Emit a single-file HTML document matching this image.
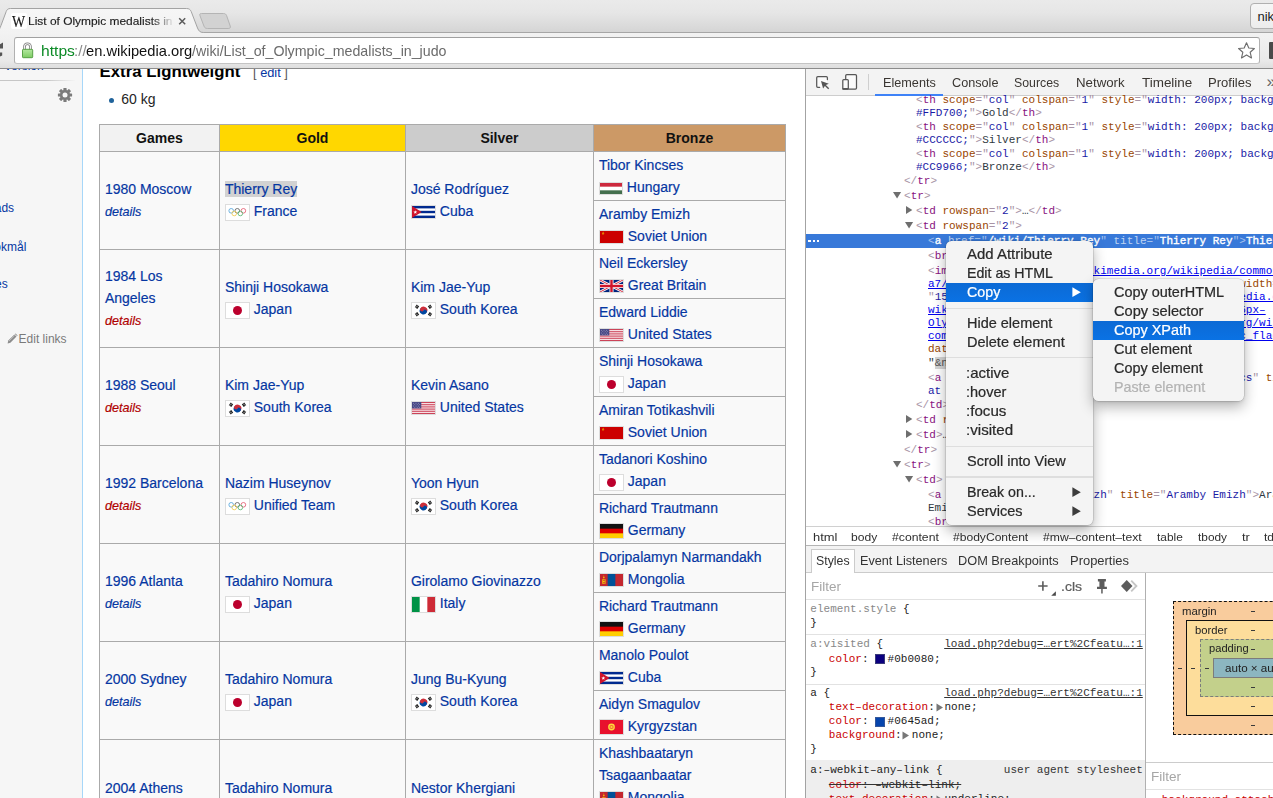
<!DOCTYPE html><html><head><meta charset="utf-8"><title>List of Olympic medalists in judo</title><style>

*{box-sizing:border-box;margin:0;padding:0}
html,body{width:1273px;height:798px;overflow:hidden;background:#fff}
body{position:relative;font-family:"Liberation Sans",sans-serif;color:#222}
.t{position:absolute;white-space:pre;font-family:"Liberation Sans",sans-serif}
.m{font-family:"Liberation Mono",monospace;letter-spacing:0.02px}
.abs{position:absolute}


#page{position:absolute;left:0;top:69px;width:805px;height:729px;overflow:hidden;background:#fff}
#side{position:absolute;left:0;top:0;width:82px;height:729px;background:#f6f6f6}
#sideb{position:absolute;left:82px;top:0;width:1px;height:729px;background:#a7d7f9}
table.wt{position:absolute;left:99px;top:55px;border-collapse:collapse;table-layout:fixed;width:686px;font:14px/22px "Liberation Sans",sans-serif;color:#252525;background:#f9f9f9}
table.wt td,table.wt th{border:1px solid #aaa;padding:0 5px 0 4.9px;vertical-align:middle;text-align:left;overflow:hidden;white-space:nowrap}
table.wt th{background:#f2f2f2;text-align:center;font-weight:bold;height:27px;color:#111}
table.wt td.b{height:49px}
table.wt td.g{padding-bottom:1px}
table.wt a{color:#0536a2;text-decoration:none;-webkit-text-stroke:0.18px currentColor}
table.wt a.v{color:#0b0080}
table.wt a.n{color:#b00000}
table.wt i{font-style:italic;font-size:12.6px}
.fl{display:inline-block;vertical-align:middle;border:1px solid #ddd;line-height:0;box-sizing:content-box}
.fl svg{display:block}
.sel{background:#d2d2d2}

#dt{position:absolute;left:805px;top:69px;width:468px;height:729px;overflow:hidden;background:#fff;border-left:1px solid #a3a3a3}
#dt .t{color:#303942}
.tg{color:#881280}.br{color:#a894a6}.an{color:#994500}.av{color:#1a1aa6}.lk{color:#00e;text-decoration:underline}.tx{color:#303942}
.selrow .tg,.selrow .av,.selrow .tx{color:#fff;-webkit-text-stroke:0.35px #fff}
.selrow .an{color:rgba(255,255,255,.68)}.selrow .br{color:rgba(255,255,255,.55)}
.pn{color:#c80000}.pv{color:#222}.gr{color:#888}
.tri{position:absolute;width:0;height:0}

.menu{position:absolute;background:#f4f4f4;border-radius:5.5px;box-shadow:0 0 0 0.5px rgba(0,0,0,.16),0 6px 14px rgba(0,0,0,.30),0 1px 3px rgba(0,0,0,.10)}
.menu .hl{position:absolute;left:0;right:0;height:19px;background:linear-gradient(#0c6ad5,#0a72e4)}
.menu .sep{position:absolute;left:0;right:0;height:1.5px;background:#dedede}

</style></head><body>
<div id="chrome"><div class="abs" style="left:0;top:0;width:1273px;height:32px;background:linear-gradient(#eaeaea,#e6e6e6 40%,#d5d5d5)"></div>
<div class="abs" style="left:0;top:32px;width:1273px;height:1px;background:#a6a6a6"></div>
<div class="abs" style="left:0;top:33px;width:1273px;height:35px;background:linear-gradient(#f2f2f2,#e9e9e9 80%,#dedede)"></div>
<div class="abs" style="left:0;top:68px;width:1273px;height:1px;background:#8c8c8c"></div>
<svg class="abs" style="left:0;top:0" width="260" height="34" viewBox="0 0 260 34">
<defs><linearGradient id="tg" x1="0" y1="0" x2="0" y2="1"><stop offset="0" stop-color="#f6f6f6"/><stop offset="1" stop-color="#f2f2f2"/></linearGradient></defs>
<path d="M-6 33.2 L-3.5 32.5 C-1 31 0 28 1 25.5 L6.2 11.5 C7 9.5 8 8.5 10.5 8.5 L186.5 8.5 C189 8.5 190.3 9.5 191.2 11.5 L197.5 28 C198.8 31 200 32.5 203.5 32.5 L203.5 33.2 Z" fill="url(#tg)"/>
<path d="M-6 32.5 L-3.5 32.5 C-1 31 0 28 1 25.5 L6.2 11.5 C7 9.5 8 8.5 10.5 8.5 L186.5 8.5 C189 8.5 190.3 9.5 191.2 11.5 L197.5 28 C198.8 31 200 32.5 203.5 32.5" fill="none" stroke="#a3a3a3" stroke-width="1"/>
<path d="M201.5 13.5 L223.5 13.5 C225.2 13.5 226 14.2 226.6 15.6 L230.2 26 C230.8 27.8 230 28.5 228.2 28.5 L207.5 28.5 C205.6 28.5 204.6 27.8 204 26.2 L200 15.8 C199.4 14.2 199.8 13.5 201.5 13.5 Z" fill="#d2d2d2" stroke="#b4b4b4" stroke-width="1"/>
</svg>
<div class="abs" style="left:11px;top:13px;width:16px;height:16px;background:#fff;border-radius:2px"></div>
<div class="t" style="top:10.50px;font-size:16.5px;line-height:21px;left:11.9px;color:#1a1a1a;font-family:'Liberation Serif',serif;transform:scaleX(0.84);transform-origin:0 0;-webkit-text-stroke:0.2px #1a1a1a">W</div>
<div class="abs" style="left:29px;top:11px;width:147px;height:20px;overflow:hidden;-webkit-mask-image:linear-gradient(90deg,#000 122px,transparent 146px);mask-image:linear-gradient(90deg,#000 122px,transparent 146px)"><div class="t" style="top:3.00px;font-size:11.1px;line-height:14px;left:-0.6799999999999997px;color:#1d1d1d;transform-origin:0 0;transform:scaleX(1.0752);-webkit-text-stroke:0.15px #1d1d1d">List of Olympic medalists in judo</div></div>
<svg class="abs" style="left:178px;top:17px" width="9" height="9" viewBox="0 0 9 9"><path d="M1.2 1.2 L7.2 7.2 M7.2 1.2 L1.2 7.2" stroke="#5a5a5a" stroke-width="1.5" fill="none"/></svg>
<div class="abs" style="left:1250px;top:3px;width:40px;height:26px;border:1px solid #b0b0b0;border-radius:4px;background:linear-gradient(#f6f6f6,#ececec)"></div>
<div class="t" style="top:8.40px;font-size:13px;line-height:17px;left:1257.5px;color:#222;">nik</div>
<svg class="abs" style="left:0;top:42px" width="5" height="16" viewBox="0 0 5 16"><path d="M0 2.2 L3 0.5 L3 6.5 L0 6.5 Z" fill="#555"/><path d="M0 10.5 L2.2 10.5 L2.2 13.5 L0 14.5 Z" fill="#555"/></svg>
<div class="abs" style="left:14px;top:37px;width:1246px;height:27px;background:#fff;border:1px solid #b1b1b1;border-top-color:#a0a0a0;border-bottom-color:#c4c4c4;border-radius:3px"></div>
<svg class="abs" style="left:21px;top:42px" width="14" height="17" viewBox="0 0 14 17">
<defs><linearGradient id="lg" x1="0" y1="0" x2="0" y2="1"><stop offset="0" stop-color="#b4e7a0"/><stop offset="0.45" stop-color="#9bdc84"/><stop offset="1" stop-color="#7ccb63"/></linearGradient></defs>
<path d="M3.5 8 L3.5 5 C3.5 2.7 4.9 1.8 6.5 1.8 C8.1 1.8 9.5 2.7 9.5 5 L9.5 8" fill="none" stroke="#7b7b7b" stroke-width="2.6"/>
<path d="M3.5 8 L3.5 5 C3.5 2.7 4.9 1.8 6.5 1.8 C8.1 1.8 9.5 2.7 9.5 5 L9.5 8" fill="none" stroke="#f4f4f4" stroke-width="1.1"/>
<rect x="1.5" y="7.3" width="10.2" height="8.4" rx="0.8" fill="url(#lg)" stroke="#4c9a3a" stroke-width="0.9"/>
</svg>
<div class="t" style="top:41.50px;font-size:14.4px;line-height:19px;left:40.64px;color:#0c8a26;transform-origin:0 0;transform:scaleX(1.0862)">https</div>
<div class="t" style="top:41.50px;font-size:14.4px;line-height:19px;left:74.14px;color:#8a8a8a;transform-origin:0 0;transform:scaleX(1.0475)">://</div>
<div class="t" style="top:41.50px;font-size:14.4px;line-height:19px;left:86.28px;color:#111;transform-origin:0 0;transform:scaleX(1.0212)">en.wikipedia.org</div>
<div class="t" style="top:41.50px;font-size:14.4px;line-height:19px;left:192.3px;color:#6b6b6b;transform-origin:0 0;transform:scaleX(0.9881)">/wiki/List_of_Olympic_medalists_in_judo</div>
<svg class="abs" style="left:1237px;top:41px" width="19" height="19" viewBox="0 0 19 19">
<path d="M9.5 1.8 L11.8 7 L17.4 7.5 L13.2 11.3 L14.5 16.9 L9.5 13.9 L4.5 16.9 L5.8 11.3 L1.6 7.5 L7.2 7 Z" fill="#fff" stroke="#6e6e6e" stroke-width="1.15" stroke-linejoin="round"/></svg>
<div class="abs" style="left:1269px;top:42px;width:6px;height:17px;background:#4a4a4a;border-radius:1px"></div></div>
<div id="page"><div id="side"></div><div id="sideb"></div>
<div class="t" style="top:-11.00px;font-size:12px;line-height:16px;left:5px;color:#0536a2;">version</div>
<div class="abs" style="left:0;top:11px;width:76px;height:1px;background:linear-gradient(90deg,#c6c6c6 60%,rgba(198,198,198,0))"></div>
<svg class="abs" style="left:57px;top:18px" width="16" height="16" viewBox="0 0 16 16">
<g fill="#7b7b7b"><circle cx="8" cy="8" r="5.1"/>
<rect x="6.4" y="0.9" width="3.2" height="14.2" rx="0.6"/>
<rect x="6.4" y="0.9" width="3.2" height="14.2" rx="0.6" transform="rotate(45 8 8)"/>
<rect x="6.4" y="0.9" width="3.2" height="14.2" rx="0.6" transform="rotate(90 8 8)"/>
<rect x="6.4" y="0.9" width="3.2" height="14.2" rx="0.6" transform="rotate(135 8 8)"/></g>
<circle cx="8" cy="8" r="2.5" fill="#f6f6f6"/></svg>
<div class="t" style="top:131.00px;font-size:12px;line-height:16px;left:-14.6px;color:#0536a2;">loads</div>
<div class="t" style="top:170.00px;font-size:12px;line-height:16px;left:-12.4px;color:#0536a2;">bokmål</div>
<div class="t" style="top:207.00px;font-size:12px;line-height:16px;left:-11.6px;color:#0536a2;">ges</div>
<svg class="abs" style="left:7px;top:264px" width="11" height="11" viewBox="0 0 11 11"><path d="M0.6 10.4 L1.3 7.6 L7.4 1.5 L9.5 3.6 L3.4 9.7 Z" fill="#8c8c8c"/><path d="M7.9 1 L8.6 0.4 L10.6 2.4 L10 3.1 Z" fill="#8c8c8c"/><path d="M2 8 L7.6 2.6" stroke="#d0d0d0" stroke-width="0.7"/></svg>
<div class="t" style="top:262.00px;font-size:12px;line-height:16px;left:18.6px;color:#7a7a7a;">Edit links</div><div class="t" style="top:-8.50px;font-size:16.8px;line-height:22px;left:99.6px;color:#000;font-weight:bold">Extra Lightweight</div>
<div class="t" style="top:-5.00px;font-size:12.8px;line-height:17px;left:253px;"><span style="color:#555">[ </span><span style="color:#0536a2">edit</span><span style="color:#555"> ]</span></div>
<div class="abs" style="left:109px;top:28.5px;width:5px;height:5px;border-radius:50%;background:#20639b"></div>
<div class="t" style="top:21.30px;font-size:14px;line-height:18px;left:121.3px;color:#252525;">60 kg</div><table class="wt"><colgroup><col style="width:120px"><col style="width:186px"><col style="width:188px"><col style="width:192px"></colgroup>
<tr><th>Games</th><th style="background:#ffd700">Gold</th><th style="background:#ccc">Silver</th><th style="background:#c96">Bronze</th></tr>
<tr><td rowspan="2"><a>1980 Moscow</a><br><i><a>details</a></i></td><td rowspan="2" class="g"><a><span class="sel">Thierry Rey</span></a><br><span class="fl"><svg width="23" height="15" viewBox="0 0 23 15"><rect width="23" height="15" fill="#fff"/>
<g fill="none" stroke-width="0.8"><circle cx="5.2" cy="5.8" r="2.3" stroke="#4a9fd8"/><circle cx="11.3" cy="5.8" r="2.3" stroke="#555"/><circle cx="17.4" cy="5.8" r="2.3" stroke="#e3536a"/><circle cx="8.25" cy="8.5" r="2.3" stroke="#f0c645"/><circle cx="14.35" cy="8.5" r="2.3" stroke="#4fb56c"/></g></svg></span>&nbsp;<a>France</a></td><td rowspan="2" class="g"><a>José Rodríguez</a><br><span class="fl"><svg width="23" height="12" viewBox="0 0 23 12"><rect width="23" height="12" fill="#002a8f"/><rect y="2.4" width="23" height="2.4" fill="#fff"/><rect y="7.2" width="23" height="2.4" fill="#fff"/>
<path d="M0 0 L9.6 6 L0 12 Z" fill="#cf142b"/><path d="M3.3 4.2 L3.8 5.5 L5.2 5.5 L4.1 6.4 L4.5 7.7 L3.3 6.9 L2.1 7.7 L2.5 6.4 L1.4 5.5 L2.8 5.5 Z" fill="#fff"/></svg></span>&nbsp;<a>Cuba</a></td><td class="b"><a>Tibor Kincses</a><br><span class="fl"><svg width="22" height="11" viewBox="0 0 22 11"><rect width="22" height="11" fill="#fff"/><rect width="22" height="3.67" fill="#cd2a3e"/><rect y="7.33" width="22" height="3.67" fill="#436f4d"/></svg></span>&nbsp;<a>Hungary</a></td></tr>
<tr><td class="b"><a>Aramby Emizh</a><br><span class="fl"><svg width="23" height="12" viewBox="0 0 23 12"><rect width="23" height="12" fill="#cc0000"/><path d="M2.6 1.6 L3.4 1.6 L3.4 3.9 L2.6 3.9 Z M2 2.2 L4.2 2.2 L4.2 2.9 L2 2.9Z" fill="#e8a200" opacity="0.9"/><circle cx="3.2" cy="1.3" r="0.5" fill="#e8a200"/></svg></span>&nbsp;<a>Soviet Union</a></td></tr>
<tr><td rowspan="2"><a>1984 Los<br>Angeles</a><br><i><a class="n">details</a></i></td><td rowspan="2" class="g"><a>Shinji Hosokawa</a><br><span class="fl"><svg width="23" height="15" viewBox="0 0 23 15"><rect width="23" height="15" fill="#fff"/><circle cx="11.5" cy="7.5" r="4.5" fill="#bc002d"/></svg></span>&nbsp;<a>Japan</a></td><td rowspan="2" class="g"><a>Kim Jae-Yup</a><br><span class="fl"><svg width="23" height="15" viewBox="0 0 23 15"><rect width="23" height="15" fill="#fff"/>
<g transform="rotate(33.7 11.5 7.5)"><path d="M7.7 7.5 A3.8 3.8 0 0 1 15.3 7.5 Z" fill="#cd2e3a"/><path d="M7.7 7.5 A3.8 3.8 0 0 0 15.3 7.5 Z" fill="#0047a0"/><circle cx="9.6" cy="7.5" r="1.9" fill="#cd2e3a"/><circle cx="13.4" cy="7.5" r="1.9" fill="#0047a0"/></g>
<g fill="#222"><rect x="3.3" y="2.2" width="3.4" height="3" transform="rotate(-56 5 3.7)"/><rect x="16.3" y="2.2" width="3.4" height="3" transform="rotate(56 18 3.7)"/><rect x="3.3" y="9.8" width="3.4" height="3" transform="rotate(56 5 11.3)"/><rect x="16.3" y="9.8" width="3.4" height="3" transform="rotate(-56 18 11.3)"/></g>
<g stroke="#fff" stroke-width="0.45"><path d="M3.2 4.6 L6.6 2.4 M16.4 2.4 L19.8 4.6 M3.2 10.4 L6.6 12.6 M16.4 12.6 L19.8 10.4"/></g></svg></span>&nbsp;<a>South Korea</a></td><td class="b"><a>Neil Eckersley</a><br><span class="fl"><svg width="23" height="12" viewBox="0 0 23 12"><rect width="23" height="12" fill="#00247d"/>
<path d="M0 0 L23 12 M23 0 L0 12" stroke="#fff" stroke-width="2.6"/>
<path d="M0 0 L23 12 M23 0 L0 12" stroke="#cf142b" stroke-width="0.9"/>
<path d="M11.5 0 V12 M0 6 H23" stroke="#fff" stroke-width="4"/>
<path d="M11.5 0 V12 M0 6 H23" stroke="#cf142b" stroke-width="2.4"/></svg></span>&nbsp;<a>Great Britain</a></td></tr>
<tr><td class="b"><a>Edward Liddie</a><br><span class="fl"><svg width="23" height="12" viewBox="0 0 23 12"><rect width="23" height="12" fill="#fff"/><rect y="0.000" width="23" height="0.923" fill="#c8334a"/><rect y="1.846" width="23" height="0.923" fill="#c8334a"/><rect y="3.692" width="23" height="0.923" fill="#c8334a"/><rect y="5.538" width="23" height="0.923" fill="#c8334a"/><rect y="7.385" width="23" height="0.923" fill="#c8334a"/><rect y="9.231" width="23" height="0.923" fill="#c8334a"/><rect y="11.077" width="23" height="0.923" fill="#c8334a"/><rect width="9.3" height="6.46" fill="#4a4a86"/><g fill="#b8b8d8"><circle cx="1.6" cy="1.2" r=".45"/><circle cx="4" cy="1.2" r=".45"/><circle cx="6.4" cy="1.2" r=".45"/><circle cx="2.8" cy="2.6" r=".45"/><circle cx="5.2" cy="2.6" r=".45"/><circle cx="7.6" cy="2.6" r=".45"/><circle cx="1.6" cy="4" r=".45"/><circle cx="4" cy="4" r=".45"/><circle cx="6.4" cy="4" r=".45"/><circle cx="2.8" cy="5.3" r=".45"/><circle cx="5.2" cy="5.3" r=".45"/><circle cx="7.6" cy="5.3" r=".45"/></g></svg></span>&nbsp;<a>United States</a></td></tr>
<tr><td rowspan="2"><a>1988 Seoul</a><br><i><a class="n">details</a></i></td><td rowspan="2" class="g"><a>Kim Jae-Yup</a><br><span class="fl"><svg width="23" height="15" viewBox="0 0 23 15"><rect width="23" height="15" fill="#fff"/>
<g transform="rotate(33.7 11.5 7.5)"><path d="M7.7 7.5 A3.8 3.8 0 0 1 15.3 7.5 Z" fill="#cd2e3a"/><path d="M7.7 7.5 A3.8 3.8 0 0 0 15.3 7.5 Z" fill="#0047a0"/><circle cx="9.6" cy="7.5" r="1.9" fill="#cd2e3a"/><circle cx="13.4" cy="7.5" r="1.9" fill="#0047a0"/></g>
<g fill="#222"><rect x="3.3" y="2.2" width="3.4" height="3" transform="rotate(-56 5 3.7)"/><rect x="16.3" y="2.2" width="3.4" height="3" transform="rotate(56 18 3.7)"/><rect x="3.3" y="9.8" width="3.4" height="3" transform="rotate(56 5 11.3)"/><rect x="16.3" y="9.8" width="3.4" height="3" transform="rotate(-56 18 11.3)"/></g>
<g stroke="#fff" stroke-width="0.45"><path d="M3.2 4.6 L6.6 2.4 M16.4 2.4 L19.8 4.6 M3.2 10.4 L6.6 12.6 M16.4 12.6 L19.8 10.4"/></g></svg></span>&nbsp;<a>South Korea</a></td><td rowspan="2" class="g"><a>Kevin Asano</a><br><span class="fl"><svg width="23" height="12" viewBox="0 0 23 12"><rect width="23" height="12" fill="#fff"/><rect y="0.000" width="23" height="0.923" fill="#c8334a"/><rect y="1.846" width="23" height="0.923" fill="#c8334a"/><rect y="3.692" width="23" height="0.923" fill="#c8334a"/><rect y="5.538" width="23" height="0.923" fill="#c8334a"/><rect y="7.385" width="23" height="0.923" fill="#c8334a"/><rect y="9.231" width="23" height="0.923" fill="#c8334a"/><rect y="11.077" width="23" height="0.923" fill="#c8334a"/><rect width="9.3" height="6.46" fill="#4a4a86"/><g fill="#b8b8d8"><circle cx="1.6" cy="1.2" r=".45"/><circle cx="4" cy="1.2" r=".45"/><circle cx="6.4" cy="1.2" r=".45"/><circle cx="2.8" cy="2.6" r=".45"/><circle cx="5.2" cy="2.6" r=".45"/><circle cx="7.6" cy="2.6" r=".45"/><circle cx="1.6" cy="4" r=".45"/><circle cx="4" cy="4" r=".45"/><circle cx="6.4" cy="4" r=".45"/><circle cx="2.8" cy="5.3" r=".45"/><circle cx="5.2" cy="5.3" r=".45"/><circle cx="7.6" cy="5.3" r=".45"/></g></svg></span>&nbsp;<a>United States</a></td><td class="b"><a>Shinji Hosokawa</a><br><span class="fl"><svg width="23" height="15" viewBox="0 0 23 15"><rect width="23" height="15" fill="#fff"/><circle cx="11.5" cy="7.5" r="4.5" fill="#bc002d"/></svg></span>&nbsp;<a>Japan</a></td></tr>
<tr><td class="b"><a>Amiran Totikashvili</a><br><span class="fl"><svg width="23" height="12" viewBox="0 0 23 12"><rect width="23" height="12" fill="#cc0000"/><path d="M2.6 1.6 L3.4 1.6 L3.4 3.9 L2.6 3.9 Z M2 2.2 L4.2 2.2 L4.2 2.9 L2 2.9Z" fill="#e8a200" opacity="0.9"/><circle cx="3.2" cy="1.3" r="0.5" fill="#e8a200"/></svg></span>&nbsp;<a>Soviet Union</a></td></tr>
<tr><td rowspan="2"><a>1992 Barcelona</a><br><i><a class="n">details</a></i></td><td rowspan="2" class="g"><a>Nazim Huseynov</a><br><span class="fl"><svg width="23" height="15" viewBox="0 0 23 15"><rect width="23" height="15" fill="#fff"/>
<g fill="none" stroke-width="0.8"><circle cx="5.2" cy="5.8" r="2.3" stroke="#4a9fd8"/><circle cx="11.3" cy="5.8" r="2.3" stroke="#555"/><circle cx="17.4" cy="5.8" r="2.3" stroke="#e3536a"/><circle cx="8.25" cy="8.5" r="2.3" stroke="#f0c645"/><circle cx="14.35" cy="8.5" r="2.3" stroke="#4fb56c"/></g></svg></span>&nbsp;<a>Unified Team</a></td><td rowspan="2" class="g"><a>Yoon Hyun</a><br><span class="fl"><svg width="23" height="15" viewBox="0 0 23 15"><rect width="23" height="15" fill="#fff"/>
<g transform="rotate(33.7 11.5 7.5)"><path d="M7.7 7.5 A3.8 3.8 0 0 1 15.3 7.5 Z" fill="#cd2e3a"/><path d="M7.7 7.5 A3.8 3.8 0 0 0 15.3 7.5 Z" fill="#0047a0"/><circle cx="9.6" cy="7.5" r="1.9" fill="#cd2e3a"/><circle cx="13.4" cy="7.5" r="1.9" fill="#0047a0"/></g>
<g fill="#222"><rect x="3.3" y="2.2" width="3.4" height="3" transform="rotate(-56 5 3.7)"/><rect x="16.3" y="2.2" width="3.4" height="3" transform="rotate(56 18 3.7)"/><rect x="3.3" y="9.8" width="3.4" height="3" transform="rotate(56 5 11.3)"/><rect x="16.3" y="9.8" width="3.4" height="3" transform="rotate(-56 18 11.3)"/></g>
<g stroke="#fff" stroke-width="0.45"><path d="M3.2 4.6 L6.6 2.4 M16.4 2.4 L19.8 4.6 M3.2 10.4 L6.6 12.6 M16.4 12.6 L19.8 10.4"/></g></svg></span>&nbsp;<a>South Korea</a></td><td class="b"><a>Tadanori Koshino</a><br><span class="fl"><svg width="23" height="15" viewBox="0 0 23 15"><rect width="23" height="15" fill="#fff"/><circle cx="11.5" cy="7.5" r="4.5" fill="#bc002d"/></svg></span>&nbsp;<a>Japan</a></td></tr>
<tr><td class="b"><a>Richard Trautmann</a><br><span class="fl"><svg width="23" height="14" viewBox="0 0 23 14"><rect width="23" height="14" fill="#dd0000"/><rect width="23" height="4.67" fill="#111"/><rect y="9.33" width="23" height="4.67" fill="#ffce00"/></svg></span>&nbsp;<a>Germany</a></td></tr>
<tr><td rowspan="2"><a>1996 Atlanta</a><br><i><a>details</a></i></td><td rowspan="2" class="g"><a>Tadahiro Nomura</a><br><span class="fl"><svg width="23" height="15" viewBox="0 0 23 15"><rect width="23" height="15" fill="#fff"/><circle cx="11.5" cy="7.5" r="4.5" fill="#bc002d"/></svg></span>&nbsp;<a>Japan</a></td><td rowspan="2" class="g"><a>Girolamo Giovinazzo</a><br><span class="fl"><svg width="23" height="15" viewBox="0 0 23 15"><rect width="23" height="15" fill="#fff"/><rect width="7.67" height="15" fill="#009246"/><rect x="15.33" width="7.67" height="15" fill="#ce2b37"/></svg></span>&nbsp;<a>Italy</a></td><td class="b"><a>Dorjpalamyn Narmandakh</a><br><span class="fl"><svg width="23" height="12" viewBox="0 0 23 12"><rect width="23" height="12" fill="#c4272f"/><rect x="7.67" width="7.67" height="12" fill="#015197"/><g fill="#f9cf02"><rect x="2.2" y="5.2" width=".7" height="4.6"/><rect x="4.8" y="5.2" width=".7" height="4.6"/><rect x="3" y="5.2" width="1.7" height=".7"/><rect x="3" y="9.1" width="1.7" height=".7"/><circle cx="3.85" cy="7.5" r=".95"/><circle cx="3.85" cy="3.6" r=".8"/><path d="M3.85 1.2 L4.4 2.5 L3.3 2.5Z"/></g></svg></span>&nbsp;<a>Mongolia</a></td></tr>
<tr><td class="b"><a>Richard Trautmann</a><br><span class="fl"><svg width="23" height="14" viewBox="0 0 23 14"><rect width="23" height="14" fill="#dd0000"/><rect width="23" height="4.67" fill="#111"/><rect y="9.33" width="23" height="4.67" fill="#ffce00"/></svg></span>&nbsp;<a>Germany</a></td></tr>
<tr><td rowspan="2"><a>2000 Sydney</a><br><i><a>details</a></i></td><td rowspan="2" class="g"><a>Tadahiro Nomura</a><br><span class="fl"><svg width="23" height="15" viewBox="0 0 23 15"><rect width="23" height="15" fill="#fff"/><circle cx="11.5" cy="7.5" r="4.5" fill="#bc002d"/></svg></span>&nbsp;<a>Japan</a></td><td rowspan="2" class="g"><a>Jung Bu-Kyung</a><br><span class="fl"><svg width="23" height="15" viewBox="0 0 23 15"><rect width="23" height="15" fill="#fff"/>
<g transform="rotate(33.7 11.5 7.5)"><path d="M7.7 7.5 A3.8 3.8 0 0 1 15.3 7.5 Z" fill="#cd2e3a"/><path d="M7.7 7.5 A3.8 3.8 0 0 0 15.3 7.5 Z" fill="#0047a0"/><circle cx="9.6" cy="7.5" r="1.9" fill="#cd2e3a"/><circle cx="13.4" cy="7.5" r="1.9" fill="#0047a0"/></g>
<g fill="#222"><rect x="3.3" y="2.2" width="3.4" height="3" transform="rotate(-56 5 3.7)"/><rect x="16.3" y="2.2" width="3.4" height="3" transform="rotate(56 18 3.7)"/><rect x="3.3" y="9.8" width="3.4" height="3" transform="rotate(56 5 11.3)"/><rect x="16.3" y="9.8" width="3.4" height="3" transform="rotate(-56 18 11.3)"/></g>
<g stroke="#fff" stroke-width="0.45"><path d="M3.2 4.6 L6.6 2.4 M16.4 2.4 L19.8 4.6 M3.2 10.4 L6.6 12.6 M16.4 12.6 L19.8 10.4"/></g></svg></span>&nbsp;<a>South Korea</a></td><td class="b"><a>Manolo Poulot</a><br><span class="fl"><svg width="23" height="12" viewBox="0 0 23 12"><rect width="23" height="12" fill="#002a8f"/><rect y="2.4" width="23" height="2.4" fill="#fff"/><rect y="7.2" width="23" height="2.4" fill="#fff"/>
<path d="M0 0 L9.6 6 L0 12 Z" fill="#cf142b"/><path d="M3.3 4.2 L3.8 5.5 L5.2 5.5 L4.1 6.4 L4.5 7.7 L3.3 6.9 L2.1 7.7 L2.5 6.4 L1.4 5.5 L2.8 5.5 Z" fill="#fff"/></svg></span>&nbsp;<a>Cuba</a></td></tr>
<tr><td class="b"><a>Aidyn Smagulov</a><br><span class="fl"><svg width="23" height="14" viewBox="0 0 23 14"><rect width="23" height="14" fill="#e8112d"/><circle cx="11.5" cy="7" r="3.4" fill="#ffd83a"/><circle cx="11.5" cy="7" r="2.1" fill="#e8112d" opacity=".55"/><circle cx="11.5" cy="7" r="1.1" fill="#ffd83a"/></svg></span>&nbsp;<a>Kyrgyzstan</a></td></tr>
<tr><td rowspan="2"><a>2004 Athens</a><br><i><a>details</a></i></td><td rowspan="2" class="g"><a>Tadahiro Nomura</a><br><span class="fl"><svg width="23" height="15" viewBox="0 0 23 15"><rect width="23" height="15" fill="#fff"/><circle cx="11.5" cy="7.5" r="4.5" fill="#bc002d"/></svg></span>&nbsp;<a>Japan</a></td><td rowspan="2" class="g"><a>Nestor Khergiani</a><br><span class="fl"><svg width="23" height="15" viewBox="0 0 23 15"><rect width="23" height="15" fill="#fff"/>
<g transform="rotate(33.7 11.5 7.5)"><path d="M7.7 7.5 A3.8 3.8 0 0 1 15.3 7.5 Z" fill="#cd2e3a"/><path d="M7.7 7.5 A3.8 3.8 0 0 0 15.3 7.5 Z" fill="#0047a0"/><circle cx="9.6" cy="7.5" r="1.9" fill="#cd2e3a"/><circle cx="13.4" cy="7.5" r="1.9" fill="#0047a0"/></g>
<g fill="#222"><rect x="3.3" y="2.2" width="3.4" height="3" transform="rotate(-56 5 3.7)"/><rect x="16.3" y="2.2" width="3.4" height="3" transform="rotate(56 18 3.7)"/><rect x="3.3" y="9.8" width="3.4" height="3" transform="rotate(56 5 11.3)"/><rect x="16.3" y="9.8" width="3.4" height="3" transform="rotate(-56 18 11.3)"/></g>
<g stroke="#fff" stroke-width="0.45"><path d="M3.2 4.6 L6.6 2.4 M16.4 2.4 L19.8 4.6 M3.2 10.4 L6.6 12.6 M16.4 12.6 L19.8 10.4"/></g></svg></span>&nbsp;<a>Georgia</a></td><td class="b" style="height:71px"><a>Khashbaataryn<br>Tsagaanbaatar</a><br><span class="fl"><svg width="23" height="12" viewBox="0 0 23 12"><rect width="23" height="12" fill="#c4272f"/><rect x="7.67" width="7.67" height="12" fill="#015197"/><g fill="#f9cf02"><rect x="2.2" y="5.2" width=".7" height="4.6"/><rect x="4.8" y="5.2" width=".7" height="4.6"/><rect x="3" y="5.2" width="1.7" height=".7"/><rect x="3" y="9.1" width="1.7" height=".7"/><circle cx="3.85" cy="7.5" r=".95"/><circle cx="3.85" cy="3.6" r=".8"/><path d="M3.85 1.2 L4.4 2.5 L3.3 2.5Z"/></g></svg></span>&nbsp;<a>Mongolia</a></td></tr>
<tr><td class="b"><a>Choi Min-Ho</a><br><span class="fl"><svg width="23" height="15" viewBox="0 0 23 15"><rect width="23" height="15" fill="#fff"/>
<g transform="rotate(33.7 11.5 7.5)"><path d="M7.7 7.5 A3.8 3.8 0 0 1 15.3 7.5 Z" fill="#cd2e3a"/><path d="M7.7 7.5 A3.8 3.8 0 0 0 15.3 7.5 Z" fill="#0047a0"/><circle cx="9.6" cy="7.5" r="1.9" fill="#cd2e3a"/><circle cx="13.4" cy="7.5" r="1.9" fill="#0047a0"/></g>
<g fill="#222"><rect x="3.3" y="2.2" width="3.4" height="3" transform="rotate(-56 5 3.7)"/><rect x="16.3" y="2.2" width="3.4" height="3" transform="rotate(56 18 3.7)"/><rect x="3.3" y="9.8" width="3.4" height="3" transform="rotate(56 5 11.3)"/><rect x="16.3" y="9.8" width="3.4" height="3" transform="rotate(-56 18 11.3)"/></g>
<g stroke="#fff" stroke-width="0.45"><path d="M3.2 4.6 L6.6 2.4 M16.4 2.4 L19.8 4.6 M3.2 10.4 L6.6 12.6 M16.4 12.6 L19.8 10.4"/></g></svg></span>&nbsp;<a>South Korea</a></td></tr>
</table></div>
<div id="dt"><div class="abs" style="left:0px;top:0px;width:467px;height:26px;background:#f3f3f3"></div>
<div class="abs" style="left:0px;top:26px;width:467px;height:1px;background:#cdcdcd"></div>
<svg class="abs" style="left:2px;top:1px" width="60" height="25" viewBox="0 0 60 25">
<rect x="9" y="7" width="10" height="10" fill="#fbfbfb"/><rect x="38" y="5" width="10" height="14" fill="#fbfbfb"/>
<g fill="none" stroke="#575757" stroke-width="1.25" stroke-linecap="round">
<path d="M19.4 9.5 L19.4 7.7 Q19.4 6.6 18.3 6.6 L9.8 6.6 Q8.7 6.6 8.7 7.7 L8.7 16.3 Q8.7 17.4 9.8 17.4 L11.6 17.4"/>
<path d="M37.7 9 L37.7 5.7 Q37.7 4.6 38.8 4.6 L47.4 4.6 Q48.5 4.6 48.5 5.7 L48.5 18.1 Q48.5 19.2 47.4 19.2 L41 19.2"/>
<rect x="34.8" y="9.7" width="5.5" height="9.5" rx="0.9" fill="#fbfbfb"/>
</g>
<rect x="34.3" y="18" width="6.5" height="1.8" rx="0.8" fill="#575757"/>
<path d="M13 11.1 L20.8 13.7 L17.9 14.9 L21.2 18.2 L20.2 19.2 L16.9 15.9 L15.1 18.4 Z" fill="#555"/>
</svg>
<div class="abs" style="left:62px;top:5px;width:1px;height:16px;background:#cfcfcf"></div>
<div class="t" style="top:5.60px;font-size:12.1px;line-height:16px;left:76.65999999999997px;color:#3a3632;transform-origin:0 0;transform:scaleX(1.0468)">Elements</div>
<div class="t" style="top:5.60px;font-size:12.1px;line-height:16px;left:145.76999999999998px;color:#3a3632;transform-origin:0 0;transform:scaleX(1.0472)">Console</div>
<div class="t" style="top:5.60px;font-size:12.1px;line-height:16px;left:208.25px;color:#3a3632;transform-origin:0 0;transform:scaleX(1.0182)">Sources</div>
<div class="t" style="top:5.60px;font-size:12.1px;line-height:16px;left:270.0999999999999px;color:#3a3632;transform-origin:0 0;transform:scaleX(1.0973)">Network</div>
<div class="t" style="top:5.60px;font-size:12.1px;line-height:16px;left:335.5999999999999px;color:#3a3632;transform-origin:0 0;transform:scaleX(1.1109)">Timeline</div>
<div class="t" style="top:5.60px;font-size:12.1px;line-height:16px;left:401.72px;color:#3a3632;transform-origin:0 0;transform:scaleX(1.0788)">Profiles</div>
<div class="t" style="top:1.50px;font-size:17px;line-height:22px;left:460.5999999999999px;color:#666;">»</div>
<div class="abs" style="left:69px;top:25px;width:68px;height:2px;background:#3e82f7"></div>
<div class="t m" style="top:24.90px;font-size:11px;line-height:13px;left:110px;"><span class="br">&lt;</span><span class="tg">th</span> <span class="an">scope</span><span class="br">="</span><span class="av">col</span><span class="br">"</span> <span class="an">colspan</span><span class="br">="</span><span class="av">1</span><span class="br">"</span><span class="br"></span> <span class="an">style</span><span class="br">="</span><span class="av">width: 200px; background–color:</span></div><div class="t m" style="top:37.90px;font-size:11px;line-height:13px;left:110px;"><span class="av">#FFD700;</span><span class="br">"&gt;</span><span class="tx">Gold</span><span class="br">&lt;/</span><span class="tg">th</span><span class="br">&gt;</span></div>
<div class="t m" style="top:51.90px;font-size:11px;line-height:13px;left:110px;"><span class="br">&lt;</span><span class="tg">th</span> <span class="an">scope</span><span class="br">="</span><span class="av">col</span><span class="br">"</span> <span class="an">colspan</span><span class="br">="</span><span class="av">1</span><span class="br">"</span><span class="br"></span> <span class="an">style</span><span class="br">="</span><span class="av">width: 200px; background–color:</span></div><div class="t m" style="top:64.90px;font-size:11px;line-height:13px;left:110px;"><span class="av">#CCCCCC;</span><span class="br">"&gt;</span><span class="tx">Silver</span><span class="br">&lt;/</span><span class="tg">th</span><span class="br">&gt;</span></div>
<div class="t m" style="top:78.90px;font-size:11px;line-height:13px;left:110px;"><span class="br">&lt;</span><span class="tg">th</span> <span class="an">scope</span><span class="br">="</span><span class="av">col</span><span class="br">"</span> <span class="an">colspan</span><span class="br">="</span><span class="av">1</span><span class="br">"</span><span class="br"></span> <span class="an">style</span><span class="br">="</span><span class="av">width: 200px; background–color:</span></div><div class="t m" style="top:91.90px;font-size:11px;line-height:13px;left:110px;"><span class="av">#CC9966;</span><span class="br">"&gt;</span><span class="tx">Bronze</span><span class="br">&lt;/</span><span class="tg">th</span><span class="br">&gt;</span></div>
<div class="t m" style="top:105.90px;font-size:11px;line-height:13px;left:98px;"><span class="br">&lt;/</span><span class="tg">tr</span><span class="br">&gt;</span></div>
<svg class="abs" style="left:87px;top:122.9px" width="9" height="8" viewBox="0 0 9 8"><path d="M0 0 L8.1 0 L4.05 6.5 Z" fill="#6e6e6e"/></svg>
<div class="t m" style="top:120.90px;font-size:11px;line-height:13px;left:98px;"><span class="br">&lt;</span><span class="tg">tr</span><span class="br">&gt;</span></div>
<svg class="abs" style="left:100.2px;top:136.8px" width="8" height="9" viewBox="0 0 8 9"><path d="M0 0 L6.3 3.95 L0 7.9 Z" fill="#6e6e6e"/></svg>
<div class="t m" style="top:135.90px;font-size:11px;line-height:13px;left:110px;"><span class="br">&lt;</span><span class="tg">td</span> <span class="an">rowspan</span><span class="br">="</span><span class="av">2</span><span class="br">"</span><span class="br">&gt;</span><span class="tx">…</span><span class="br">&lt;/</span><span class="tg">td</span><span class="br">&gt;</span></div>
<svg class="abs" style="left:99px;top:152.9px" width="9" height="8" viewBox="0 0 9 8"><path d="M0 0 L8.1 0 L4.05 6.5 Z" fill="#6e6e6e"/></svg>
<div class="t m" style="top:150.90px;font-size:11px;line-height:13px;left:110px;"><span class="br">&lt;</span><span class="tg">td</span> <span class="an">rowspan</span><span class="br">="</span><span class="av">2</span><span class="br">"</span><span class="br">&gt;</span></div>
<div class="abs" style="left:0px;top:165px;width:467px;height:14px;background:#3879d9"></div>
<div class="abs" style="left:2.3999999999999773px;top:170.9px;width:2.3px;height:2.3px;background:#fff"></div><div class="abs" style="left:6.600000000000023px;top:170.9px;width:2.3px;height:2.3px;background:#fff"></div><div class="abs" style="left:10.799999999999955px;top:170.9px;width:2.3px;height:2.3px;background:#fff"></div>
<div class="t m selrow" style="top:165.90px;font-size:11px;line-height:13px;left:122px;"><span class="br">&lt;</span><span class="tg">a</span> <span class="an">href</span><span class="br">="</span><span class="av">/wiki/Thierry_Rey</span><span class="br">"</span> <span class="an">title</span><span class="br">="</span><span class="av">Thierry Rey</span><span class="br">"</span><span class="br">&gt;</span><span class="tx">Thierry Rey</span><span class="br">&lt;/</span><span class="tg">a</span><span class="br">&gt;</span></div>
<div class="t m" style="top:180.90px;font-size:11px;line-height:13px;left:122px;"><span class="br">&lt;</span><span class="tg">br</span><span class="br">&gt;</span></div>
<div class="t m" style="top:195.90px;font-size:11px;line-height:13px;left:122px;"><span class="br">&lt;</span><span class="tg">img</span> <span class="an">alt</span><span class="br"></span> <span class="an">src</span><span class="br">="</span><span class="lk">//upload.wikimedia.org/wikipedia/commons/thumb/a/</span></div>
<div class="t m" style="top:208.90px;font-size:11px;line-height:13px;left:122px;"><span class="lk">a7/Olympic_flag.svg/23px–Olympic_flag.svg.png</span><span class="br">"</span> <span class="an">width</span><span class="br">="</span><span class="av">23</span><span class="br">"</span> <span class="an">height</span><span class="br">=</span></div>
<div class="t m" style="top:221.90px;font-size:11px;line-height:13px;left:122px;"><span class="br">"</span><span class="av">15</span><span class="br">"</span> <span class="an">class</span><span class="br">="</span><span class="av">thumbborder</span><span class="br">"</span> <span class="an">srcset</span><span class="br">="</span><span class="lk">//upload.wikimedia.org/</span></div>
<div class="t m" style="top:234.90px;font-size:11px;line-height:13px;left:122px;"><span class="lk">wikipedia/commons/thumb/a/a7/Olympic_flag.svg/35px–</span></div>
<div class="t m" style="top:247.90px;font-size:11px;line-height:13px;left:122px;"><span class="lk">Olympic_flag.svg.png 1.5x</span><span class="av">, </span><span class="lk">//upload.wikimedia.org/wikipedia/</span></div>
<div class="t m" style="top:260.90px;font-size:11px;line-height:13px;left:122px;"><span class="lk">commons/thumb/a/a7/Olympic_flag.svg/46px–Olympic_flag.svg.png 2x</span><span class="br">"</span></div>
<div class="t m" style="top:273.90px;font-size:11px;line-height:13px;left:122px;"><span class="an">data–file–width</span><span class="br">="</span><span class="av">1020</span><span class="br">"</span> <span class="an">data–file–height</span><span class="br">="</span><span class="av">680</span><span class="br">"&gt;</span></div>
<div class="t m" style="top:287.90px;font-size:11px;line-height:13px;left:122px;"><span class="tx">"</span><span style="background:#d4d4d4;color:#555">&amp;nbsp;</span><span class="tx">"</span></div>
<div class="t m" style="top:302.90px;font-size:11px;line-height:13px;left:122px;"><span class="br">&lt;</span><span class="tg">a</span> <span class="an">href</span><span class="br">="</span><span class="av">/wiki/France_at_the_1980_Summer_Olympics</span><span class="br">"</span><span class="br"></span> <span class="an">title</span><span class="br">="</span><span class="av">France</span></div>
<div class="t m" style="top:315.90px;font-size:11px;line-height:13px;left:122px;"><span class="av">at the 1980 Summer Olympics</span><span class="br">"&gt;</span><span class="tx">France</span><span class="br">&lt;/</span><span class="tg">a</span><span class="br">&gt;</span></div>
<div class="t m" style="top:329.90px;font-size:11px;line-height:13px;left:110px;"><span class="br">&lt;/</span><span class="tg">td</span><span class="br">&gt;</span></div>
<svg class="abs" style="left:100.2px;top:345.8px" width="8" height="9" viewBox="0 0 8 9"><path d="M0 0 L6.3 3.95 L0 7.9 Z" fill="#6e6e6e"/></svg>
<div class="t m" style="top:344.90px;font-size:11px;line-height:13px;left:110px;"><span class="br">&lt;</span><span class="tg">td</span> <span class="an">rowspan</span><span class="br">="</span><span class="av">2</span><span class="br">"</span><span class="br">&gt;</span><span class="tx">…</span><span class="br">&lt;/</span><span class="tg">td</span><span class="br">&gt;</span></div>
<svg class="abs" style="left:100.2px;top:360.8px" width="8" height="9" viewBox="0 0 8 9"><path d="M0 0 L6.3 3.95 L0 7.9 Z" fill="#6e6e6e"/></svg>
<div class="t m" style="top:359.90px;font-size:11px;line-height:13px;left:110px;"><span class="br">&lt;</span><span class="tg">td</span><span class="br">&gt;</span><span class="tx">…</span><span class="br">&lt;/</span><span class="tg">td</span><span class="br">&gt;</span></div>
<div class="t m" style="top:374.90px;font-size:11px;line-height:13px;left:98px;"><span class="br">&lt;/</span><span class="tg">tr</span><span class="br">&gt;</span></div>
<svg class="abs" style="left:87px;top:391.9px" width="9" height="8" viewBox="0 0 9 8"><path d="M0 0 L8.1 0 L4.05 6.5 Z" fill="#6e6e6e"/></svg>
<div class="t m" style="top:389.90px;font-size:11px;line-height:13px;left:98px;"><span class="br">&lt;</span><span class="tg">tr</span><span class="br">&gt;</span></div>
<svg class="abs" style="left:99px;top:406.9px" width="9" height="8" viewBox="0 0 9 8"><path d="M0 0 L8.1 0 L4.05 6.5 Z" fill="#6e6e6e"/></svg>
<div class="t m" style="top:404.90px;font-size:11px;line-height:13px;left:110px;"><span class="br">&lt;</span><span class="tg">td</span><span class="br">&gt;</span></div>
<div class="t m" style="top:419.90px;font-size:11px;line-height:13px;left:122px;"><span class="br">&lt;</span><span class="tg">a</span> <span class="an">href</span><span class="br">="</span><span class="av">/wiki/Aramby_Emizh</span><span class="br">"</span> <span class="an">title</span><span class="br">="</span><span class="av">Aramby Emizh</span><span class="br">"</span><span class="br">&gt;</span><span class="tx">Aramby</span></div>
<div class="t m" style="top:432.90px;font-size:11px;line-height:13px;left:122px;"><span class="tx">Emizh</span><span class="br">&lt;/</span><span class="tg">a</span><span class="br">&gt;</span></div>
<div class="t m" style="top:446.90px;font-size:11px;line-height:13px;left:122px;"><span class="br">&lt;</span><span class="tg">br</span><span class="br">&gt;</span></div>
<div class="abs" style="left:0px;top:457px;width:467px;height:1px;background:#d0d0d0"></div>
<div class="abs" style="left:0px;top:458px;width:467px;height:18px;background:#fff"></div>
<div class="abs" style="left:0px;top:476px;width:467px;height:1px;background:#b4b4b4"></div>
<div class="t" style="top:459.50px;font-size:11.6px;line-height:15px;left:6.6299999999999955px;color:#303030;transform-origin:0 0;transform:scaleX(1.115)">html</div>
<div class="t" style="top:459.50px;font-size:11.6px;line-height:15px;left:45.40999999999997px;color:#303030;transform-origin:0 0;transform:scaleX(1.0427)">body</div>
<div class="t" style="top:459.50px;font-size:11.6px;line-height:15px;left:86.13999999999999px;color:#303030;transform-origin:0 0;transform:scaleX(1.0532)">#content</div>
<div class="t" style="top:459.50px;font-size:11.6px;line-height:15px;left:147.34000000000003px;color:#303030;transform-origin:0 0;transform:scaleX(1.0417)">#bodyContent</div>
<div class="t" style="top:459.50px;font-size:11.6px;line-height:15px;left:237.33999999999992px;color:#303030;transform-origin:0 0;transform:scaleX(1.0491)">#mw–content–text</div>
<div class="t" style="top:459.50px;font-size:11.6px;line-height:15px;left:351.22px;color:#303030;transform-origin:0 0;transform:scaleX(1.0255)">table</div>
<div class="t" style="top:459.50px;font-size:11.6px;line-height:15px;left:391.81999999999994px;color:#303030;transform-origin:0 0;transform:scaleX(1.0217)">tbody</div>
<div class="t" style="top:459.50px;font-size:11.6px;line-height:15px;left:436.1099999999999px;color:#303030;transform-origin:0 0;transform:scaleX(1.1147)">tr</div>
<div class="t" style="top:459.50px;font-size:11.6px;line-height:15px;left:458.31999999999994px;color:#303030;transform-origin:0 0;transform:scaleX(1.0391)">td</div>
<div class="abs" style="left:0px;top:477px;width:467px;height:26px;background:#f3f3f3"></div>
<div class="abs" style="left:0px;top:503px;width:467px;height:1px;background:#cbcbcb"></div>
<div class="abs" style="left:5px;top:480px;width:44px;height:24px;background:#fff;border:1px solid #cbcbcb;border-bottom:none"></div>
<div class="t" style="top:484.00px;font-size:12.1px;line-height:16px;left:9.840000000000032px;color:#333;transform-origin:0 0;transform:scaleX(1.0196)">Styles</div>
<div class="t" style="top:484.00px;font-size:12.1px;line-height:16px;left:53.65999999999997px;color:#333;transform-origin:0 0;transform:scaleX(1.0466)">Event Listeners</div>
<div class="t" style="top:484.00px;font-size:12.1px;line-height:16px;left:151.64999999999998px;color:#333;transform-origin:0 0;transform:scaleX(1.0555)">DOM Breakpoints</div>
<div class="t" style="top:484.00px;font-size:12.1px;line-height:16px;left:263.6300000000001px;color:#333;transform-origin:0 0;transform:scaleX(1.0703)">Properties</div>
<div class="abs" style="left:339px;top:504px;width:1px;height:225px;background:#b0b0b0"></div>
<div class="t" style="top:510.00px;font-size:12.3px;line-height:16px;left:4.590000000000032px;color:#a6a6a6;transform-origin:0 0;transform:scaleX(1.0942)">Filter</div>
<div class="abs" style="left:0px;top:530px;width:339px;height:1px;background:#e2e2e2"></div>
<svg class="abs" style="left:231px;top:511px" width="22" height="18" viewBox="0 0 22 18"><path d="M5.9 1.3 V10.7 M1.2 6 H10.6" stroke="#5c5c5c" stroke-width="1.6" fill="none"/><path d="M18.9 11.2 L18.9 15.7 L14.2 15.7 Z" fill="#4a4a4a"/></svg>
<div class="t" style="top:510.00px;font-size:12.4px;line-height:16px;left:254.83999999999992px;color:#5c5c5c;transform-origin:0 0;transform:scaleX(1.132);-webkit-text-stroke:0.2px #5c5c5c">.cls</div>
<svg class="abs" style="left:289px;top:509px" width="14" height="17" viewBox="0 0 14 17"><path d="M2.9 1.1 H10.9 V3.4 H9.5 V8.7 H11.9 V11 H2 V8.7 H4.4 V3.4 H2.9 Z" fill="#5c5c5c"/><path d="M6.95 11 V15.6" stroke="#5c5c5c" stroke-width="1.5"/></svg>
<svg class="abs" style="left:314px;top:510px" width="18" height="14" viewBox="0 0 18 14"><path d="M11.2 1.6 L16.4 7 L11.2 12.4" fill="none" stroke="#c6c6c6" stroke-width="1.9"/><path d="M6.7 1 L12.5 7 L6.7 12.9 L1 7 Z" fill="#5c5c5c"/></svg>
<div class="t m" style="top:533.00px;font-size:11px;line-height:14px;left:4.2999999999999545px;"><span class="gr">element.style</span> <span class="pv">{</span></div>
<div class="t m" style="top:547.00px;font-size:11px;line-height:14px;left:4.2999999999999545px;"><span class="pv">}</span></div>
<div class="abs" style="left:0px;top:565px;width:339px;height:1px;background:#e2e2e2"></div>
<div class="t m" style="top:568.00px;font-size:11px;line-height:14px;left:4.2999999999999545px;"><span class="gr">a:visited</span> <span class="pv">{</span></div>
<div class="t m" style="top:583.00px;font-size:11px;line-height:14px;left:22.799999999999955px;"><span class="pn">color</span><span class="pv">: </span></div>
<div class="abs" style="left:69px;top:585px;width:10px;height:10px;background:#0b0080;border:1px solid #3a3a7a"></div>
<div class="t m" style="top:583.00px;font-size:11px;line-height:14px;left:81.60000000000002px;"><span class="pv">#0b0080;</span></div>
<div class="t m" style="top:596.00px;font-size:11px;line-height:14px;left:4.2999999999999545px;"><span class="pv">}</span></div>
<div class="abs" style="left:0px;top:615px;width:339px;height:1px;background:#e2e2e2"></div>
<div class="t m" style="top:617.00px;font-size:11px;line-height:14px;left:4.2999999999999545px;"><span class="pv">a {</span></div>
<div class="t m" style="top:631.00px;font-size:11px;line-height:14px;left:22.799999999999955px;"><span class="pn">text–decoration</span><span class="pv">:</span></div>
<svg class="abs" style="left:130px;top:634px" width="8" height="9" viewBox="0 0 8 9"><path d="M0.5 0.6 L7 4.5 L0.5 8.4 Z" fill="#777"/></svg>
<div class="t m" style="top:631.00px;font-size:11px;line-height:14px;left:138.5px;"><span class="pv">none;</span></div>
<div class="t m" style="top:645.00px;font-size:11px;line-height:14px;left:22.799999999999955px;"><span class="pn">color</span><span class="pv">: </span></div>
<div class="abs" style="left:69px;top:648px;width:10px;height:10px;background:#0645ad;border:1px solid #35589a"></div>
<div class="t m" style="top:645.00px;font-size:11px;line-height:14px;left:81.60000000000002px;"><span class="pv">#0645ad;</span></div>
<div class="t m" style="top:659.00px;font-size:11px;line-height:14px;left:22.799999999999955px;"><span class="pn">background</span><span class="pv">:</span></div>
<svg class="abs" style="left:96px;top:662px" width="8" height="9" viewBox="0 0 8 9"><path d="M0.5 0.6 L7 4.5 L0.5 8.4 Z" fill="#777"/></svg>
<div class="t m" style="top:659.00px;font-size:11px;line-height:14px;left:105.79999999999995px;"><span class="pv">none;</span></div>
<div class="t m" style="top:673.00px;font-size:11px;line-height:14px;left:4.2999999999999545px;"><span class="pv">}</span></div>
<div class="t m" style="top:568.00px;font-size:11px;line-height:14px;right:130.20000000000005px;color:#333;text-decoration:underline;left:auto;">load.php?debug=…ert%2Cfeatu…:1</div>
<div class="t m" style="top:617.00px;font-size:11px;line-height:14px;right:130.20000000000005px;color:#333;text-decoration:underline;left:auto;">load.php?debug=…ert%2Cfeatu…:1</div>
<div class="abs" style="left:0px;top:691px;width:339px;height:38px;background:#eee"></div>
<div class="t m" style="top:694.00px;font-size:11px;line-height:14px;left:4.2999999999999545px;"><span class="pv">a:–webkit–any–link {</span></div>
<div class="t m" style="top:694.00px;font-size:11px;line-height:14px;right:130.20000000000005px;color:#333;left:auto;">user agent stylesheet</div>
<div class="t m" style="top:709.00px;font-size:11px;line-height:14px;left:22.799999999999955px;"><span style="text-decoration:line-through;color:#333"><span class="pn">color</span><span class="pv">: –webkit–link;</span></span></div>
<div class="t m" style="top:723.00px;font-size:11px;line-height:14px;left:22.799999999999955px;"><span class="pn">text–decoration</span><span class="pv">:</span></div>
<svg class="abs" style="left:130px;top:726px" width="8" height="9" viewBox="0 0 8 9"><path d="M0.5 0.6 L7 4.5 L0.5 8.4 Z" fill="#777"/></svg>
<div class="t m" style="top:723.00px;font-size:11px;line-height:14px;left:138.5px;"><span class="pv">underline;</span></div>
<div class="abs" style="left:367px;top:532px;width:120px;height:134px;background:#f9cc9d;border:1px dashed #111"></div>
<div class="t" style="top:535.00px;font-size:11px;line-height:14px;left:375.76px;color:#222;transform-origin:0 0;transform:scaleX(1.031)">margin</div>
<div class="abs" style="left:445px;top:542px;width:4px;height:1px;background:#3a3a3a"></div>
<div class="abs" style="left:380px;top:551px;width:110px;height:96px;background:#fddd9b;border:1px solid #111"></div>
<div class="t" style="top:554.00px;font-size:11px;line-height:14px;left:388.97px;color:#222;transform-origin:0 0;transform:scaleX(1.0223)">border</div>
<div class="abs" style="left:445px;top:561px;width:4px;height:1px;background:#3a3a3a"></div>
<div class="abs" style="left:394px;top:570px;width:100px;height:58px;background:#c3d08b;border:1px dashed #7c7c7c"></div>
<div class="t" style="top:572.00px;font-size:11px;line-height:14px;left:402.8800000000001px;color:#222;transform-origin:0 0;transform:scaleX(1.0125)">padding</div>
<div class="abs" style="left:445px;top:580px;width:4px;height:1px;background:#3a3a3a"></div>
<div class="abs" style="left:407px;top:589px;width:90px;height:20px;background:#8cb6c0;border:1px solid #7c7c7c"></div>
<div class="t" style="top:592.00px;font-size:11px;line-height:14px;left:418.51px;color:#222;transform-origin:0 0;transform:scaleX(1.056)">auto × auto</div>
<div class="abs" style="left:372px;top:599px;width:4px;height:1px;background:#3a3a3a"></div>
<div class="abs" style="left:385px;top:599px;width:4px;height:1px;background:#3a3a3a"></div>
<div class="abs" style="left:399px;top:599px;width:4px;height:1px;background:#3a3a3a"></div>
<div class="abs" style="left:445px;top:618px;width:4px;height:1px;background:#3a3a3a"></div>
<div class="abs" style="left:445px;top:637px;width:4px;height:1px;background:#3a3a3a"></div>
<div class="abs" style="left:445px;top:656px;width:4px;height:1px;background:#3a3a3a"></div>
<div class="abs" style="left:340px;top:693px;width:127px;height:1px;background:#ccc"></div>
<div class="t" style="top:700.00px;font-size:12.3px;line-height:16px;left:344.5799999999999px;color:#a6a6a6;transform-origin:0 0;transform:scaleX(1.1019)">Filter</div>
<div class="abs" style="left:340px;top:720px;width:127px;height:1px;background:#e2e2e2"></div>
<div class="t m" style="top:724.00px;font-size:11px;line-height:14px;left:355.79999999999995px;"><span class="pn">background–attachment</span></div></div>
<div class="menu" style="left:946px;top:241px;width:147px;height:284px">
<div class="t" style="top:3.50px;font-size:13.9px;line-height:19px;left:21.46px;color:#2a2a2a;transform-origin:0 0;transform:scaleX(1.0766);-webkit-text-stroke:0.22px #2a2a2a">Add Attribute</div>
<div class="t" style="top:22.50px;font-size:13.9px;line-height:19px;left:20.63px;color:#2a2a2a;transform-origin:0 0;transform:scaleX(1.0222);-webkit-text-stroke:0.22px #2a2a2a">Edit as HTML</div>
<div class="hl" style="top:42px"></div>
<div class="t" style="top:41.50px;font-size:13.9px;line-height:19px;left:20.99px;color:#fff;transform-origin:0 0;transform:scaleX(1.0275);-webkit-text-stroke:0.22px #fff">Copy</div>
<svg class="abs" style="left:125.59999999999991px;top:45.9px" width="10" height="11" viewBox="0 0 10 11"><path d="M0.4 0.3 L8.8 5.2 L0.4 10.1 Z" fill="#fff"/></svg>
<div class="sep" style="top:66.6px"></div>
<div class="t" style="top:72.50px;font-size:13.9px;line-height:19px;left:20.6px;color:#2a2a2a;transform-origin:0 0;transform:scaleX(1.0427);-webkit-text-stroke:0.22px #2a2a2a">Hide element</div>
<div class="t" style="top:91.50px;font-size:13.9px;line-height:19px;left:20.6px;color:#2a2a2a;transform-origin:0 0;transform:scaleX(1.0453);-webkit-text-stroke:0.22px #2a2a2a">Delete element</div>
<div class="sep" style="top:115.9px"></div>
<div class="t" style="top:122.50px;font-size:13.9px;line-height:19px;left:20.35px;color:#2a2a2a;transform-origin:0 0;transform:scaleX(1.0801);-webkit-text-stroke:0.22px #2a2a2a">:active</div>
<div class="t" style="top:141.50px;font-size:13.9px;line-height:19px;left:20.39px;color:#2a2a2a;transform-origin:0 0;transform:scaleX(1.0462);-webkit-text-stroke:0.22px #2a2a2a">:hover</div>
<div class="t" style="top:160.50px;font-size:13.9px;line-height:19px;left:20.34px;color:#2a2a2a;transform-origin:0 0;transform:scaleX(1.0894);-webkit-text-stroke:0.22px #2a2a2a">:focus</div>
<div class="t" style="top:179.50px;font-size:13.9px;line-height:19px;left:20.33px;color:#2a2a2a;transform-origin:0 0;transform:scaleX(1.0913);-webkit-text-stroke:0.22px #2a2a2a">:visited</div>
<div class="sep" style="top:204.5px"></div>
<div class="t" style="top:210.50px;font-size:13.9px;line-height:19px;left:20.95px;color:#2a2a2a;transform-origin:0 0;transform:scaleX(1.0417);-webkit-text-stroke:0.22px #2a2a2a">Scroll into View</div>
<div class="sep" style="top:235.1px"></div>
<div class="t" style="top:241.50px;font-size:13.9px;line-height:19px;left:20.63px;color:#2a2a2a;transform-origin:0 0;transform:scaleX(1.023);-webkit-text-stroke:0.22px #2a2a2a">Break on...</div>
<svg class="abs" style="left:125.59999999999991px;top:245.9px" width="10" height="11" viewBox="0 0 10 11"><path d="M0.4 0.3 L8.8 5.2 L0.4 10.1 Z" fill="#3c3c3c"/></svg>
<div class="t" style="top:260.50px;font-size:13.9px;line-height:19px;left:20.95px;color:#2a2a2a;transform-origin:0 0;transform:scaleX(1.0423);-webkit-text-stroke:0.22px #2a2a2a">Services</div>
<svg class="abs" style="left:125.59999999999991px;top:264.9px" width="10" height="11" viewBox="0 0 10 11"><path d="M0.4 0.3 L8.8 5.2 L0.4 10.1 Z" fill="#3c3c3c"/></svg>
</div><div class="menu" style="left:1093px;top:279px;width:151px;height:122px">
<div class="t" style="top:3.50px;font-size:13.9px;line-height:19px;left:20.88px;color:#2a2a2a;transform-origin:0 0;transform:scaleX(1.0404);-webkit-text-stroke:0.22px #2a2a2a">Copy outerHTML</div>
<div class="t" style="top:22.50px;font-size:13.9px;line-height:19px;left:20.87px;color:#2a2a2a;transform-origin:0 0;transform:scaleX(1.0528);-webkit-text-stroke:0.22px #2a2a2a">Copy selector</div>
<div class="hl" style="top:42px"></div>
<div class="t" style="top:41.50px;font-size:13.9px;line-height:19px;left:20.88px;color:#fff;transform-origin:0 0;transform:scaleX(1.0387);-webkit-text-stroke:0.22px #fff">Copy XPath</div>
<div class="t" style="top:60.50px;font-size:13.9px;line-height:19px;left:20.88px;color:#2a2a2a;transform-origin:0 0;transform:scaleX(1.0424);-webkit-text-stroke:0.22px #2a2a2a">Cut element</div>
<div class="t" style="top:79.50px;font-size:13.9px;line-height:19px;left:20.88px;color:#2a2a2a;transform-origin:0 0;transform:scaleX(1.0357);-webkit-text-stroke:0.22px #2a2a2a">Copy element</div>
<div class="t" style="top:98.50px;font-size:13.9px;line-height:19px;left:20.62px;color:#b3b3b3;transform-origin:0 0;transform:scaleX(1.0262);-webkit-text-stroke:0.22px #b3b3b3">Paste element</div>
</div>
</body></html>
